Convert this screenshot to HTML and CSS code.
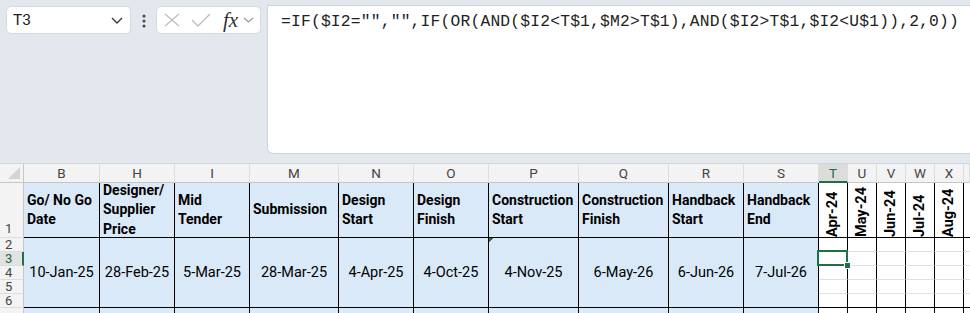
FILE: index.html
```html
<!DOCTYPE html>
<html>
<head>
    <title>Planning sheet</title>
    <link rel="stylesheet" href="styles.css">
</head>
<body>
    <div class="toolbar">
        <div class="namebox">
            <span>T3</span>
            <svg width="12" height="7" viewBox="0 0 12 7"><path d="M1 1 L6 6 L11 1" fill="none" stroke="#333" stroke-width="1.3"/></svg>
        </div>
        <div class="dots">
            <svg width="4" height="14" viewBox="0 0 4 14"><circle cx="2" cy="2" r="1.5" fill="#444"/><circle cx="2" cy="7" r="1.5" fill="#444"/><circle cx="2" cy="12" r="1.5" fill="#444"/></svg>
        </div>
        <div class="fxbox">
            <svg class="ic-x" width="16" height="14" viewBox="0 0 16 14"><path d="M1 1 L15 13 M15 1 L1 13" fill="none" stroke="#bdbdbd" stroke-width="1.3"/></svg>
            <svg class="ic-ok" width="20" height="14" viewBox="0 0 20 14"><path d="M1 7 L7 13 L19 1" fill="none" stroke="#bdbdbd" stroke-width="1.3"/></svg>
            <span class="fx">fx</span>
            <svg class="ic-down" width="11" height="6" viewBox="0 0 11 6"><path d="M1 1 L5.5 5 L10 1" fill="none" stroke="#999" stroke-width="1.2"/></svg>
        </div>
        <div class="formula">=IF($I2="","",IF(OR(AND($I2&lt;T$1,$M2&gt;T$1),AND($I2&gt;T$1,$I2&lt;U$1)),2,0))</div>
    </div>

    <div class="sheet">
        <!-- column letters -->
        <div class="corner"><span class="tri"></span></div>
        <div class="col">B</div>
        <div class="col">H</div>
        <div class="col">I</div>
        <div class="col">M</div>
        <div class="col">N</div>
        <div class="col">O</div>
        <div class="col">P</div>
        <div class="col">Q</div>
        <div class="col">R</div>
        <div class="col">S</div>
        <div class="col active">T</div>
        <div class="col">U</div>
        <div class="col">V</div>
        <div class="col">W</div>
        <div class="col">X</div>
        <div class="col"></div>

        <!-- row 1 -->
        <div class="row row1">1</div>
        <div class="hdr">Go/ No Go<br>Date</div>
        <div class="hdr">Designer/<br>Supplier<br>Price</div>
        <div class="hdr">Mid<br>Tender</div>
        <div class="hdr">Submission</div>
        <div class="hdr">Design<br>Start</div>
        <div class="hdr">Design<br>Finish</div>
        <div class="hdr">Construction<br>Start</div>
        <div class="hdr">Construction<br>Finish</div>
        <div class="hdr">Handback<br>Start</div>
        <div class="hdr">Handback<br>End</div>
        <div class="mon"><span>Apr-24</span></div>
        <div class="mon"><span>May-24</span></div>
        <div class="mon"><span>Jun-24</span></div>
        <div class="mon"><span>Jul-24</span></div>
        <div class="mon"><span>Aug-24</span></div>
        <div class="edge thick"></div>

        <!-- rows 2-6, dates merged -->
        <div class="row">2</div>
        <div class="date">10-Jan-25</div>
        <div class="date">28-Feb-25</div>
        <div class="date">5-Mar-25</div>
        <div class="date">28-Mar-25</div>
        <div class="date">4-Apr-25</div>
        <div class="date">4-Oct-25</div>
        <div class="date flagged">4-Nov-25</div>
        <div class="date">6-May-26</div>
        <div class="date">6-Jun-26</div>
        <div class="date">7-Jul-26</div>
        <div class="blank"></div><div class="blank"></div><div class="blank"></div><div class="blank"></div><div class="blank"></div><div class="edge"></div>

        <div class="row current">3</div>
        <div class="blank selected"></div><div class="blank"></div><div class="blank"></div><div class="blank"></div><div class="blank"></div><div class="edge"></div>

        <div class="row">4</div>
        <div class="blank"></div><div class="blank"></div><div class="blank"></div><div class="blank"></div><div class="blank"></div><div class="edge"></div>

        <div class="row">5</div>
        <div class="blank"></div><div class="blank"></div><div class="blank"></div><div class="blank"></div><div class="blank"></div><div class="edge"></div>

        <div class="row">6</div>
        <div class="blank last"></div><div class="blank last"></div><div class="blank last"></div><div class="blank last"></div><div class="blank last"></div><div class="edge thick"></div>

        <!-- row 7 (cut off) -->
        <div class="row"></div>
        <div class="fill"></div><div class="fill"></div><div class="fill"></div><div class="fill"></div><div class="fill"></div>
        <div class="fill"></div><div class="fill"></div><div class="fill"></div><div class="fill"></div><div class="fill"></div>
        <div class="blank"></div><div class="blank"></div><div class="blank"></div><div class="blank"></div><div class="blank"></div><div class="edge"></div>
    </div>
</body>
</html>
```

FILE: styles.css
```css
body {
    margin: 0;
    background-color: #e3e7ee;
    font-family: Roboto, "Liberation Sans", sans-serif;
    color: #000;
    overflow: hidden;
}

/* Barra superior */
.toolbar {
    display: flex;
    align-items: flex-start;
    height: 163px;
    padding-left: 6px;
    box-sizing: border-box;
}

.namebox {
    display: flex;
    align-items: center;
    justify-content: space-between;
    width: 125px;
    height: 28px;
    margin-top: 6px;
    padding: 0 7px 0 6px;
    box-sizing: border-box;
    background-color: #fff;
    border: 1px solid #d6d9de;
    border-radius: 5px;
    font-size: 15.5px;
    color: #222;
}

.dots {
    margin: 14px 0 0 11px;
    height: 14px;
}

.dots svg {
    display: block;
}

.fxbox {
    display: flex;
    align-items: center;
    width: 105px;
    height: 28px;
    margin: 6px 0 0 10px;
    padding-left: 7px;
    box-sizing: border-box;
    background-color: #fff;
    border: 1px solid #d6d9de;
    border-radius: 5px;
}

.ic-x {
    margin-right: 11px;
}

.ic-ok {
    margin-right: 12px;
}

.fx {
    font-family: "Liberation Serif", serif;
    font-style: italic;
    font-size: 21px;
    color: #333;
    margin-right: 5px;
    line-height: 20px;
}

.formula {
    flex: 1;
    height: 149px;
    margin: 5px 0 0 6px;
    padding: 6px 0 0 13px;
    box-sizing: border-box;
    background-color: #fff;
    border: 1px solid #d0d3d8;
    border-right: none;
    border-radius: 0 0 0 6px;
    font-family: "Liberation Mono", monospace;
    font-size: 16.3px;
    letter-spacing: 0.2px;
    color: #222;
    white-space: nowrap;
}

/* Grade da planilha */
.sheet {
    display: grid;
    grid-template-columns: 24px 76px 75px 75px 89px 75px 75px 90px 90px 75px 75px 29px 29px 29px 29px 29px 1fr;
    grid-template-rows: 19px 55px 14px 14px 14px 14px 14px 1fr;
    height: 150px;
    border-top: 1px solid #d4d6da;
    background-color: #fff;
    overflow: hidden;
}

.sheet > div {
    box-sizing: border-box;
    min-width: 0;
}

.corner {
    display: flex;
    justify-content: flex-end;
    align-items: flex-end;
    padding: 0 3px 3px 0;
    background-color: #f3f3f3;
    border-right: 1px solid #c6c6c6;
    border-bottom: 1px solid #c6c6c6;
}

.tri {
    width: 0;
    height: 0;
    border-left: 12px solid transparent;
    border-bottom: 12px solid #d4d4d4;
}

.col {
    display: flex;
    align-items: center;
    justify-content: center;
    background-color: #f3f3f3;
    border-right: 1px solid #dedede;
    border-bottom: 1px solid #c6c6c6;
    font-size: 13.5px;
    color: #444;
}

.col.active {
    background-color: #dcdcdc;
    color: #1d6b3f;
    border-bottom: 2px solid #1e7145;
}

.row {
    display: flex;
    align-items: center;
    padding-left: 5px;
    background-color: #f3f3f3;
    border-right: 1px solid #c6c6c6;
    border-bottom: 1px solid #dedede;
    font-size: 13px;
    line-height: 13px;
    color: #444;
    overflow: hidden;
}

.row1 {
    align-items: flex-end;
    padding-bottom: 2px;
}

.row.current {
    background-color: #e2e2e2;
    color: #1d6b3f;
    border-right: 2px solid #1e7145;
}

.hdr {
    display: flex;
    align-items: center;
    padding-left: 3px;
    background-color: #dae9f8;
    border-right: 1px solid #000;
    border-bottom: 1px solid #000;
    font-weight: bold;
    font-size: 14px;
    line-height: 19.5px;
    white-space: nowrap;
}

.mon {
    display: flex;
    justify-content: center;
    border-right: 1px solid #000;
    border-bottom: 1px solid #000;
}

.mon span {
    writing-mode: vertical-rl;
    transform: rotate(180deg);
    font-weight: bold;
    font-size: 14.5px;
    line-height: 16px;
}

.date {
    grid-row: span 5;
    display: flex;
    align-items: center;
    justify-content: center;
    background-color: #dae9f8;
    border-right: 1px solid #000;
    border-bottom: 1px solid #000;
    font-size: 14.5px;
}

.flagged {
    background-image: linear-gradient(135deg, #1e7b34 50%, transparent 50%);
    background-size: 5px 5px;
    background-repeat: no-repeat;
}

.blank {
    border-right: 1px solid #000;
    border-bottom: 1px solid #e0e0e0;
}

.blank.last {
    border-bottom: 1px solid #000;
}

.edge {
    border-bottom: 1px solid #e0e0e0;
}

.edge.thick {
    border-bottom: 1px solid #000;
}

.fill {
    background-color: #dae9f8;
    border-right: 1px solid #000;
}

/* Celula selecionada */
.selected {
    position: relative;
}

.selected::after {
    content: "";
    position: absolute;
    top: -2px;
    left: -2px;
    right: -1px;
    bottom: -1px;
    border: 2px solid #1e7145;
}

.selected::before {
    content: "";
    position: absolute;
    right: -4px;
    bottom: -4px;
    width: 5px;
    height: 5px;
    background-color: #1e7145;
    border: 1px solid #fff;
    z-index: 1;
}
```
